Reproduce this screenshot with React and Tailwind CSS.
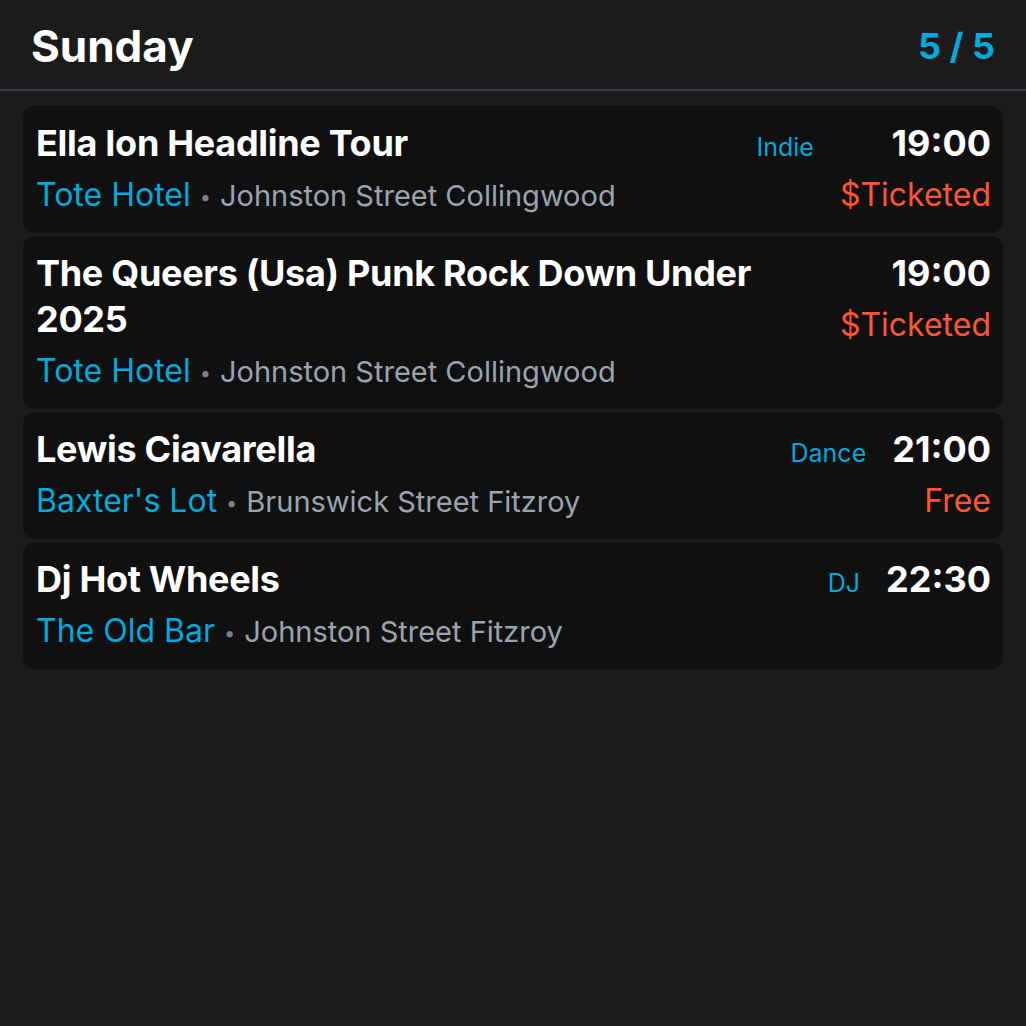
import React from "react";

const events = [
  { title: "Ella Ion Headline Tour", venue: "Tote Hotel", address: "Johnston Street Collingwood", genre: "Indie", time: "19:00", price: "$Ticketed" },
  { title: "The Queers (Usa) Punk Rock Down Under 2025", venue: "Tote Hotel", address: "Johnston Street Collingwood", genre: null, time: "19:00", price: "$Ticketed" },
  { title: "Lewis Ciavarella", venue: "Baxter's Lot", address: "Brunswick Street Fitzroy", genre: "Dance", time: "21:00", price: "Free" },
  { title: "Dj Hot Wheels", venue: "The Old Bar", address: "Johnston Street Fitzroy", genre: "DJ", time: "22:30", price: null },
];

function Card({ e }) {
  return (
    <div className="flex items-baseline rounded-[12px] bg-[#101010] pl-[13px] pr-[12px] pt-[14px] pb-[18px]">
      <div className="flex min-w-0 flex-1 flex-col pr-6">
        <div className="text-[36px] font-bold leading-[46px] tracking-[-0.3px] text-white">{e.title}</div>
        <div className="mt-[9px] whitespace-nowrap text-[32px] leading-[40px]">
          <span className="text-[#03a9db]">{e.venue}</span>
          <span className="mx-[9px] align-[2px] text-[20px] leading-none text-[#7a7f8a]">•</span>
          <span className="text-[29px] leading-none text-[#9ca3af]">{e.address}</span>
        </div>
      </div>
      {e.genre && (
        <div className="mr-[26px] text-[25px] leading-[46px] text-[#03a9db]">{e.genre}</div>
      )}
      <div className="flex flex-col items-end">
        <div className="text-[36px] font-bold leading-[46px] text-white">{e.time}</div>
        {e.price && (
          <div className="mt-[9px] text-[32px] leading-[40px] text-[#ff5533]">{e.price}</div>
        )}
      </div>
    </div>
  );
}

export default function App() {
  return (
    <div
      className="min-h-[1026px] w-full bg-[#1b1b1b]"
      style={{ fontFamily: "Inter, 'Noto Sans', sans-serif" }}
    >
      <header className="flex h-[91px] items-center justify-between border-b-2 border-[#3a404c] px-[31px] pt-[3px]">
        <h1 className="text-[44px] font-bold leading-none text-white">Sunday</h1>
        <div className="text-[36px] font-bold leading-none text-[#03a9db]">5 / 5</div>
      </header>
      <div className="flex flex-col gap-[3px] px-[23px] pt-[15px]">
        {events.map((e, i) => (
          <Card key={i} e={e} />
        ))}
      </div>
    </div>
  );
}
